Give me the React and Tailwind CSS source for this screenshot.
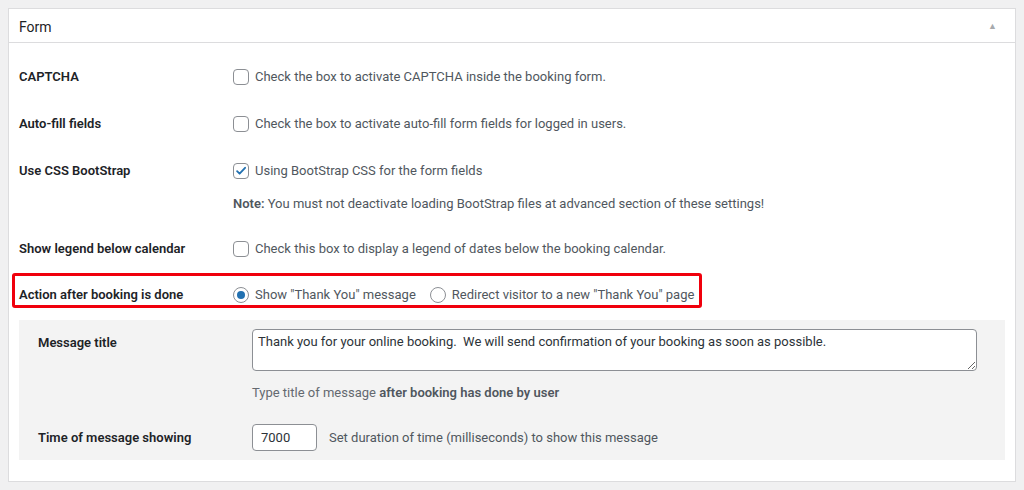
import { useState } from "react";

const FONT = { fontFamily: 'Roboto, "Open Sans", "Liberation Sans", sans-serif' };

function Checkbox({ checked }) {
  return (
    <span className="flex h-[16px] w-[16px] shrink-0 items-center justify-center rounded-[4px] border border-[#8c8f94] bg-white">
      {checked ? (
        <svg viewBox="0 0 20 20" className="h-[18px] w-[18px]">
          <path d="M4.4 10.2l3.6 3.6 7.8-8.4" fill="none" stroke="#2271b1" strokeWidth="2.6" strokeLinecap="round" strokeLinejoin="round" />
        </svg>
      ) : null}
    </span>
  );
}

function Radio({ checked }) {
  return (
    <span className="flex h-[16px] w-[16px] shrink-0 items-center justify-center rounded-full border border-[#8c8f94] bg-white">
      {checked ? <span className="h-[8px] w-[8px] rounded-full bg-[#2271b1]" /> : null}
    </span>
  );
}

function Row({ label, children, className = "h-[47px]" }) {
  return (
    <div className={`flex items-center ${className}`}>
      <div className="w-[214px] shrink-0 font-semibold text-[#1d2327]">{label}</div>
      <div className="flex items-center gap-[6px] whitespace-nowrap text-[#50575e]">{children}</div>
    </div>
  );
}

export default function App() {
  const [action] = useState("message");

  return (
    <div className="min-h-[490px] bg-[#f0f0f1] px-[8px] pt-[8px] text-[13px] leading-[20px]" style={FONT}>
      <div className="w-[1008px] border border-[#dcdcde] bg-white">
        <div className="flex h-[34px] items-center justify-between border-b border-[#dcdcde] pl-[10px] pr-[18px]">
          <span className="pt-[2px] text-[14px] text-[#1d2327]">Form</span>
          <span className="text-[9px] text-[#a7aaad]">▲</span>
        </div>

        <div className="px-[10px] pb-[21px] pt-[10px]">
          <Row label="CAPTCHA">
            <Checkbox />
            <span>Check the box to activate CAPTCHA inside the booking form.</span>
          </Row>
          <Row label="Auto-fill fields">
            <Checkbox />
            <span>Check the box to activate auto-fill form fields for logged in users.</span>
          </Row>
          <div className="pb-[11px]">
            <Row label="Use CSS BootStrap">
              <Checkbox checked />
              <span>Using BootStrap CSS for the form fields</span>
            </Row>
            <div className="flex h-[20px] items-center pl-[214px] text-[#50575e]">
              <span>
                <b className="font-semibold">Note:</b> You must not deactivate loading BootStrap files at advanced section of these settings!
              </span>
            </div>
          </div>
          <Row label="Show legend below calendar">
            <Checkbox />
            <span>Check this box to display a legend of dates below the booking calendar.</span>
          </Row>

          <div className="-ml-[7px] mt-[1px] flex h-[35px] w-[690px] items-center rounded-[3px] border-[3px] border-[#f0000c] pl-[4px] pt-[8px]">
            <div className="w-[214px] shrink-0 font-semibold text-[#1d2327]">Action after booking is done</div>
            <div className="flex items-center whitespace-nowrap text-[#50575e]">
              <Radio checked={action === "message"} />
              <span className="ml-[6px]">Show "Thank You" message</span>
              <span className="ml-[14px]">
                <Radio checked={action === "page"} />
              </span>
              <span className="ml-[6px]">Redirect visitor to a new "Thank You" page</span>
            </div>
          </div>

          <div className="mt-[12px] h-[140px] bg-[#f3f3f3] pl-[19px] pt-[9px]">
            <div className="flex">
              <div className="w-[214px] shrink-0 pt-[4px] font-semibold text-[#1d2327]">Message title</div>
              <div>
                <textarea
                  readOnly
                  defaultValue="Thank you for your online booking.  We will send confirmation of your booking as soon as possible."
                  className="block h-[42px] w-[725px] rounded-[4px] border border-[#8c8f94] bg-white px-[5px] pt-[2px] text-[13px] leading-[20px] text-[#2c3338] outline-none"
                  style={FONT}
                />
                <div className="mt-[12px] text-[#646970]">
                  Type title of message <b className="font-semibold text-[#50575e]">after booking has done by user</b>
                </div>
              </div>
            </div>
            <div className="mt-[21px] flex items-center">
              <div className="w-[214px] shrink-0 font-semibold text-[#1d2327]">Time of message showing</div>
              <input
                readOnly
                defaultValue="7000"
                className="h-[27px] w-[65px] rounded-[4px] border border-[#8c8f94] bg-white px-[8px] text-[13px] text-[#2c3338] outline-none"
                style={FONT}
              />
              <span className="ml-[12px] text-[#50575e]">Set duration of time (milliseconds) to show this message</span>
            </div>
          </div>
        </div>
      </div>
    </div>
  );
}
